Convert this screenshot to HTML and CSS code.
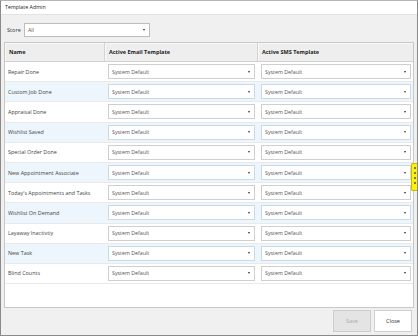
FILE: index.html
```html
<!DOCTYPE html>
<html lang="en">
<head>
	<meta charset="UTF-8">
	<title>Template Admin</title>
	<link rel="stylesheet" href="styles.css">
</head>
<body>
	<div class="window">
		<div class="titlebar">Template Admin</div>
		<div class="store-row">
			<span class="store-label">Store</span>
			<div class="select store-select"><span>All</span><i class="arrow"></i></div>
		</div>
		<div class="grid">
			<div class="grid-head">
				<div class="th">Name</div>
				<div class="th">Active Email Template</div>
				<div class="th">Active SMS Template</div>
			</div>
			<div class="grid-body" id="rows"></div>
		</div>
		<div class="footer">
			<button class="btn btn-disabled">Save</button>
			<button class="btn">Close</button>
		</div>
		<div class="side-tab"><b></b><b></b><b></b><b></b></div>
	</div>
	<script>
		var names = ['Repair Done', 'Custom Job Done', 'Appraisal Done', 'Wishlist Saved',
			'Special Order Done', 'New Appointment Associate', "Today's Appointments and Tasks",
			'Wishlist On Demand', 'Layaway Inactivtiy', 'New Task', 'Blind Counts'];
		var str = '';
		for(var i = 0; i < names.length; i++){
			str += `
				<div class="row${i % 2 == 1 ? ' row-alt' : ''}">
					<div class="td name">${names[i]}</div>
					<div class="td"><div class="select"><span>System Default</span><i class="arrow"></i></div></div>
					<div class="td"><div class="select"><span>System Default</span><i class="arrow"></i></div></div>
				</div>
			`;
		}
		document.getElementById('rows').innerHTML = str;
	</script>
</body>
</html>
```

FILE: styles.css
```css
body{ margin: 0; font-family: "Open Sans", "Noto Sans", sans-serif; }
.window{
	position: relative; width: 418px; height: 336px; box-sizing: border-box;
	border: 1px solid #8a8a8a; border-top-color: #b5b5b5; background: #f0f0f0;
	display: flex; flex-direction: column;
}
.titlebar{
	height: 13px; line-height: 12px; background: #fff; font-size: 5.3px; color: #222;
	padding-left: 4px; border-bottom: 1px solid #e2e2e2;
}
.store-row{
	display: flex; align-items: center; height: 14px; margin: 8px 0 5px 6px;
}
.store-label{ font-size: 5.6px; color: #333; width: 17px; }
.select{
	position: relative; box-sizing: border-box; height: 15px; background: #fff;
	border: 1px solid #cfcfcf; display: flex; align-items: center;
	font-size: 5.3px; color: #555; padding-left: 3px;
}
.store-select{ width: 126px; height: 14px; border-color: #bdbdbd; }
.arrow{
	position: absolute; right: 4px; top: 50%; margin-top: -1px;
	border-left: 1.6px solid transparent; border-right: 1.6px solid transparent;
	border-top: 2.2px solid #333;
}
.grid{
	margin: 0 3px; height: 266px; box-sizing: border-box; background: #fff;
	border: 1px solid #c8c8c8;
}
.grid-head{
	display: grid; grid-template-columns: 100px 153px 1fr; height: 18px;
	background: #eeeeee; border-bottom: 1px solid #d2d2d2;
}
.th{
	font-size: 5.5px; font-weight: 700; color: #222; padding-left: 4px;
	display: flex; align-items: center; border-right: 1px solid #d4d4d4;
	box-shadow: inset 1px 1px 0 #f8f8f8;
}
.th:last-child{ border-right: 0; }
.row{
	display: grid; grid-template-columns: 100px 153px 1fr; height: 20.2px;
	border-bottom: 1px solid #e9e9e9; box-sizing: border-box;
}
.row-alt{ background: #eef6fd; }
.row-alt .select{ border-color: #c9d9e8; }
.td{ display: flex; align-items: center; padding: 0 3px 0 3px; }
.td:last-child{ padding-right: 2px; }
.td .select{ flex: 1; }
.name{ font-size: 5.4px; color: #444; padding-left: 3px; }
.footer{
	display: flex; justify-content: flex-end; gap: 3px; padding: 2px 5px 0 0;
}
.btn{
	width: 38px; height: 22px; box-sizing: border-box; font-family: inherit;
	font-size: 5.5px; color: #333; background: #fff; border: 1px solid #cfcfcf;
	padding: 0;
}
.btn-disabled{ background: #e4e4e4; color: #aaa; border-color: #cdcdcd; }
.side-tab{
	position: absolute; right: 0; top: 162px; width: 6px; height: 28px;
	background: #fff200; border: 1px solid #c9b800; border-right: 0;
	border-radius: 2px 0 0 2px; display: flex; flex-direction: column;
	align-items: center; gap: 3px; padding-top: 3px; box-sizing: border-box;
}
.side-tab b{ width: 2px; height: 2px; background: #555; border-radius: 1px; }
```
